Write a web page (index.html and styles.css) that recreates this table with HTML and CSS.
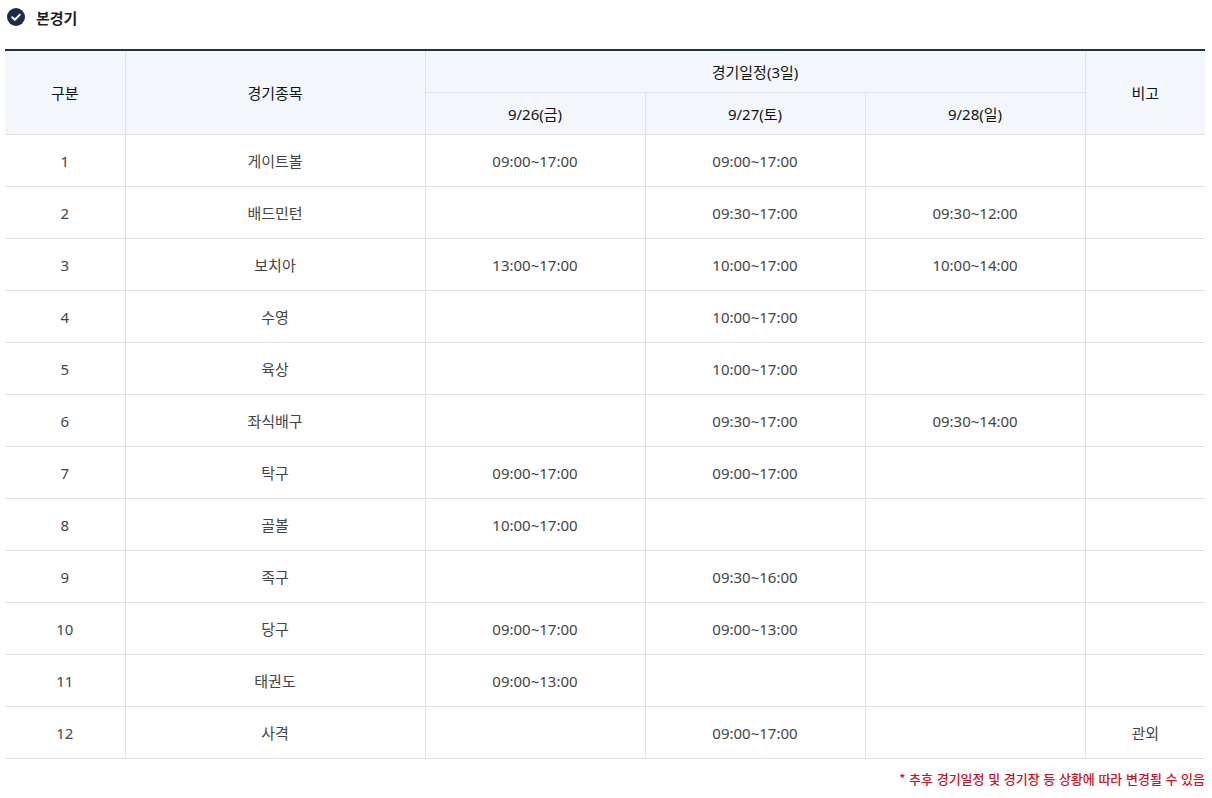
FILE: index.html
```html
<!DOCTYPE html>
<html lang="ko">
<head>
<meta charset="utf-8">
<title>본경기</title>
<link rel="stylesheet" href="styles.css">
</head>
<body>
<div class="wrap">
  <h3 class="title">
    <svg class="title-icon" width="18" height="18" viewBox="0 0 18 18" aria-hidden="true">
      <circle cx="9" cy="9" r="9" fill="#1f2b47"/>
      <path d="M5.2 9.2 L7.9 11.8 L12.9 6.6" fill="none" stroke="#fff" stroke-width="2" stroke-linecap="round" stroke-linejoin="round"/>
    </svg>
    <span>본경기</span>
  </h3>
  <table class="sched">
    <colgroup>
      <col class="c-no"><col class="c-name"><col class="c-day"><col class="c-day"><col class="c-day"><col class="c-note">
    </colgroup>
    <thead>
      <tr class="h1">
        <th rowspan="2" class="first">구분</th>
        <th rowspan="2">경기종목</th>
        <th colspan="3">경기일정(3일)</th>
        <th rowspan="2" class="last">비고</th>
      </tr>
      <tr class="h2">
        <th>9/26(금)</th>
        <th>9/27(토)</th>
        <th>9/28(일)</th>
      </tr>
    </thead>
    <tbody>
      <tr><td class="first">1</td><td>게이트볼</td><td>09:00~17:00</td><td>09:00~17:00</td><td></td><td class="last"></td></tr>
      <tr><td class="first">2</td><td>배드민턴</td><td></td><td>09:30~17:00</td><td>09:30~12:00</td><td class="last"></td></tr>
      <tr><td class="first">3</td><td>보치아</td><td>13:00~17:00</td><td>10:00~17:00</td><td>10:00~14:00</td><td class="last"></td></tr>
      <tr><td class="first">4</td><td>수영</td><td></td><td>10:00~17:00</td><td></td><td class="last"></td></tr>
      <tr><td class="first">5</td><td>육상</td><td></td><td>10:00~17:00</td><td></td><td class="last"></td></tr>
      <tr><td class="first">6</td><td>좌식배구</td><td></td><td>09:30~17:00</td><td>09:30~14:00</td><td class="last"></td></tr>
      <tr><td class="first">7</td><td>탁구</td><td>09:00~17:00</td><td>09:00~17:00</td><td></td><td class="last"></td></tr>
      <tr><td class="first">8</td><td>골볼</td><td>10:00~17:00</td><td></td><td></td><td class="last"></td></tr>
      <tr><td class="first">9</td><td>족구</td><td></td><td>09:30~16:00</td><td></td><td class="last"></td></tr>
      <tr><td class="first">10</td><td>당구</td><td>09:00~17:00</td><td>09:00~13:00</td><td></td><td class="last"></td></tr>
      <tr><td class="first">11</td><td>태권도</td><td>09:00~13:00</td><td></td><td></td><td class="last"></td></tr>
      <tr><td class="first">12</td><td>사격</td><td></td><td>09:00~17:00</td><td></td><td class="last">관외</td></tr>
    </tbody>
  </table>
  <p class="note">* 추후 경기일정 및 경기장 등 상황에 따라 변경될 수 있음</p>
</div>
</body>
</html>
```

FILE: styles.css
```css
html, body {
  margin: 0;
  padding: 0;
  background: #fff;
}
body {
  font-family: "Noto Sans", "Noto Sans CJK KR", sans-serif;
  color: #444;
}
.wrap {
  padding: 0 7px 0 5px;
}
.title {
  display: flex;
  align-items: center;
  gap: 11px;
  margin: 0;
  height: 34px;
  padding-left: 2px;
  font-size: 15px;
  font-weight: 700;
  color: #1e1e1e;
  font-family: "Noto Sans CJK KR", sans-serif;
}
.title-icon {
  display: block;
  flex: none;
}
.sched {
  width: 1200px;
  margin-top: 15px;
  border-collapse: collapse;
  table-layout: fixed;
  border-top: 2px solid #1c2f58;
  font-size: 15px;
}
.c-no { width: 120px; }
.c-name { width: 300px; }
.c-day { width: 220px; }
.c-note { width: 120px; }
.sched th, .sched td {
  border: 1px solid #dfe1e5;
  text-align: center;
  vertical-align: middle;
  padding: 0;
}
.sched th {
  background: #f3f6fb;
  font-weight: 400;
  color: #111;
}
.sched .first { border-left: none; }
.sched .last { border-right: none; }
.sched .h1 th { height: 41px; }
.sched .h2 th { height: 41px; }
.sched td {
  height: 51px;
  color: #444;
}
.note {
  margin: 10px 0 0 0;
  text-align: right;
  font-size: 13px;
  font-weight: 500;
  color: #d0101b;
  font-family: "Noto Sans CJK KR", sans-serif;
}
```
